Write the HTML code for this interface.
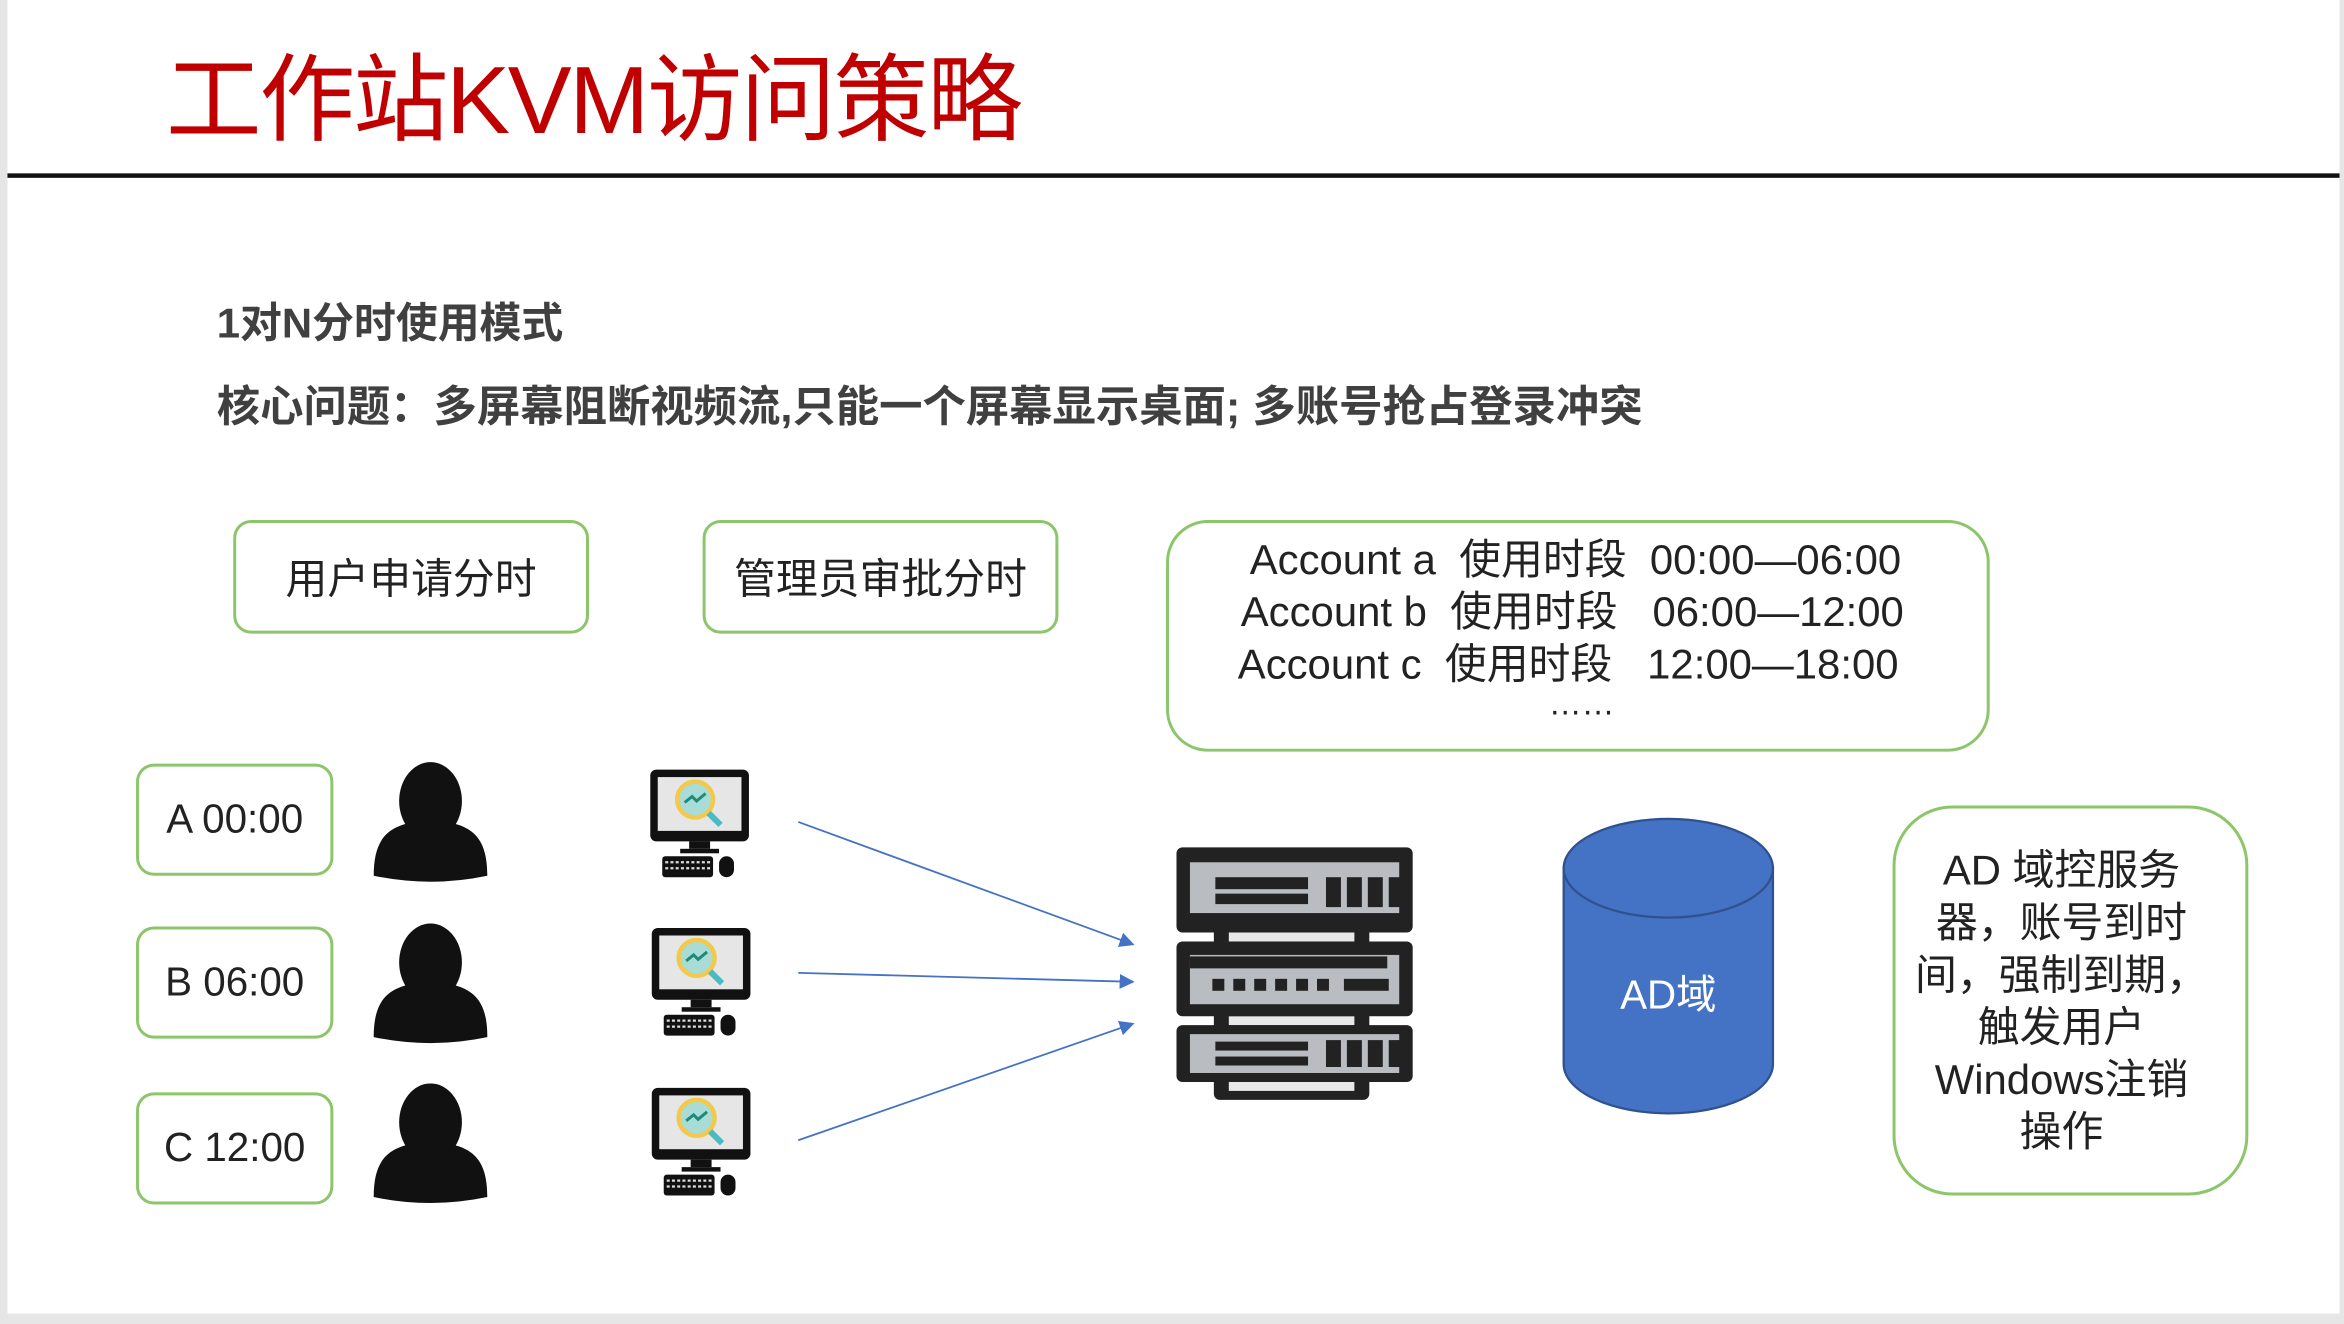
<!DOCTYPE html>
<html><head><meta charset="utf-8"><style>
html,body{margin:0;padding:0;background:#fff;}
body{width:2344px;height:1324px;overflow:hidden;position:relative;}
#s{position:absolute;left:0;top:0;width:1568px;height:886px;transform:scale(1.4949,1.4944);transform-origin:0 0;background:#fff;font-family:"Liberation Sans","Noto Sans CJK SC",sans-serif;color:#222;}
.a{position:absolute;}
.box{position:absolute;border:2px solid #8cc56a;border-radius:12px;box-sizing:border-box;display:flex;align-items:center;justify-content:center;font-size:28px;color:#222;}
.t{position:absolute;white-space:nowrap;}
</style></head><body><div id="s">
<div class="a" style="left:0;top:0;width:5px;height:886px;background:#e6e6e6"></div>
<div class="a" style="right:0;top:0;width:3px;height:886px;background:#e6e6e6"></div>
<div class="a" style="left:0;top:879px;width:1568px;height:7px;background:#e6e6e6"></div>
<div class="t" style="left:111px;top:16px;font-size:64px;color:#c00000;letter-spacing:-1.5px">工作站KVM访问策略</div>
<div class="a" style="left:5px;top:116px;width:1560px;height:3px;background:#111"></div>
<div class="t" style="left:145px;top:195px;font-size:28px;font-weight:bold;color:#404040">1对N分时使用模式</div>
<div class="t" style="left:145px;top:249px;font-size:29px;font-weight:bold;color:#404040">核心问题：多屏幕阻断视频流,只能一个屏幕显示桌面; 多账号抢占登录冲突</div>
<div class="box" style="left:156px;top:348px;width:238px;height:76px">用户申请分时</div>
<div class="box" style="left:470px;top:348px;width:238px;height:76px">管理员审批分时</div>
<div class="box" style="left:780px;top:348px;width:551px;height:155px;border-radius:28px"></div>
<div class="t" style="left:836px;top:357px;font-size:28px;line-height:35px">Account a&nbsp; 使用时段&nbsp; 00:00—06:00</div>
<div class="t" style="left:830px;top:392px;font-size:28px;line-height:35px">Account b&nbsp; 使用时段&nbsp;&nbsp; 06:00—12:00</div>
<div class="t" style="left:828px;top:427px;font-size:28px;line-height:35px">Account c&nbsp; 使用时段&nbsp;&nbsp; 12:00—18:00</div>
<div class="t" style="left:1036px;top:458px;font-size:22px">……</div>
<div class="box" style="left:91px;top:511px;width:132px;height:75px;font-size:27px">A 00:00</div>
<div class="box" style="left:91px;top:620px;width:132px;height:75px;font-size:27px">B 06:00</div>
<div class="box" style="left:91px;top:731px;width:132px;height:75px;font-size:27px">C 12:00</div>
<svg class="a" style="left:0;top:0" width="1568" height="886">
<defs>
<g id="p"><ellipse cx="38" cy="28" rx="21" ry="26" fill="#111"/><path d="M0,78 C0,55 8,45 28,42 L38,50 L48,42 C68,45 76,55 76,78 Q38,86 0,78Z" fill="#111"/></g>
<g id="c"><rect x="0" y="0" width="66" height="48" rx="4" fill="#111"/><rect x="5" y="5" width="56" height="36" fill="#e6e6e6"/><circle cx="30" cy="20" r="12" fill="#a9dcd6" stroke="#f2c94c" stroke-width="3"/><path d="M23,22 l5,-4 3,3 6,-5" stroke="#1f8a7a" stroke-width="2" fill="none"/><line x1="39" y1="29" x2="47" y2="37" stroke="#4bbbc2" stroke-width="4"/><rect x="26" y="48" width="14" height="5" fill="#111"/><rect x="20" y="53" width="26" height="3" fill="#111"/><rect x="8" y="58" width="34" height="14" rx="2" fill="#111"/><path d="M10,62h30M10,66h30" stroke="#ddd" stroke-width="1.5" stroke-dasharray="2 1.5"/><rect x="46" y="58" width="10" height="14" rx="5" fill="#111"/></g>
<marker id="m" markerWidth="10" markerHeight="10" refX="9" refY="5" orient="auto" markerUnits="userSpaceOnUse"><path d="M0,0 L10,5 L0,10z" fill="#4472c4"/></marker>
</defs>
<use href="#p" x="250" y="508"/><use href="#p" x="250" y="616"/><use href="#p" x="250" y="723"/>
<use href="#c" x="435" y="515"/><use href="#c" x="436" y="621"/><use href="#c" x="436" y="728"/>
<g stroke="#4472c4" stroke-width="1.2" marker-end="url(#m)"><line x1="534" y1="550" x2="758" y2="632"/><line x1="534" y1="651" x2="758" y2="657"/><line x1="534" y1="763" x2="758" y2="685"/></g>
<g transform="translate(784,566)">
<rect x="28" y="2" width="104" height="168" rx="4" fill="#222"/>
<rect x="38" y="58" width="84" height="6" fill="#e8e8e8"/><rect x="38" y="114" width="84" height="6" fill="#e8e8e8"/><rect x="38" y="158" width="84" height="6" fill="#e8e8e8"/>
<g fill="#222"><rect x="3" y="1" width="158" height="57" rx="4"/><rect x="3" y="64" width="158" height="50" rx="4"/><rect x="3" y="120" width="158" height="38" rx="4"/></g>
<rect x="12" y="11" width="140" height="34" fill="#b9bcc0"/>
<rect x="12" y="73" width="140" height="33" fill="#b9bcc0"/>
<rect x="12" y="126" width="140" height="26" fill="#b9bcc0"/>
<g fill="#222"><rect x="29" y="21" width="62" height="8"/><rect x="29" y="32" width="62" height="7"/><rect x="103" y="21" width="10" height="20"/><rect x="117" y="21" width="10" height="20"/><rect x="131" y="21" width="10" height="20"/><rect x="145" y="21" width="9" height="20"/>
<rect x="12" y="74" width="132" height="8"/><rect x="27" y="89" width="8" height="8"/><rect x="41" y="89" width="8" height="8"/><rect x="55" y="89" width="8" height="8"/><rect x="69" y="89" width="8" height="8"/><rect x="83" y="89" width="8" height="8"/><rect x="97" y="89" width="8" height="8"/><rect x="115" y="89" width="30" height="8"/>
<rect x="29" y="131" width="62" height="6"/><rect x="29" y="141" width="62" height="6"/><rect x="103" y="130" width="10" height="18"/><rect x="117" y="130" width="10" height="18"/><rect x="131" y="130" width="10" height="18"/><rect x="145" y="130" width="9" height="18"/></g>
</g>
<path d="M1046,580 L1046,712 A70,33 0 0 0 1186,712 L1186,580" fill="#4472c4" stroke="#2f528f" stroke-width="1.5"/>
<ellipse cx="1116" cy="581" rx="70" ry="33" fill="#4472c4" stroke="#2f528f" stroke-width="1.5"/>
<text x="1116" y="675" font-size="27" fill="#fff" text-anchor="middle" font-family="Liberation Sans, Noto Sans CJK SC, sans-serif">AD域</text>
</svg>
<div class="box" style="left:1266px;top:539px;width:238px;height:261px;border-radius:40px"></div>
<div class="t" style="left:1254px;top:565px;width:250px;text-align:center;font-size:28px;line-height:35px;white-space:normal">AD 域控服务<br>器，账号到时<br>间，强制到期，<br>触发用户<br>Windows注销<br>操作</div>
</div></body></html>
